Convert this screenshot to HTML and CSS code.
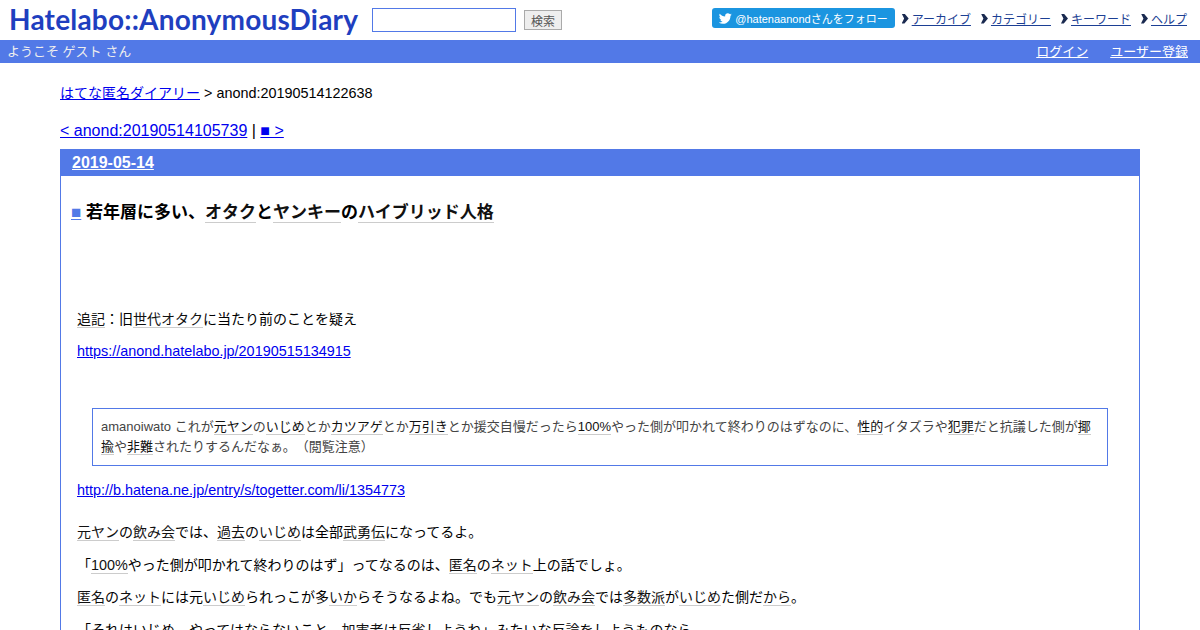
FILE: index.html
```html
<!DOCTYPE html>
<html lang="ja">
<head>
  <meta charset="UTF-8" />
  <title>anond:20190514122638</title>
  <link rel="stylesheet" href="styles.css">
</head>
<body>
  <div class="header">
    <a class="logo" href="#">Hatelabo::AnonymousDiary</a>
    <form class="search">
      <input class="search-box" type="text">
      <button class="search-btn" type="button">検索</button>
    </form>
    <div class="header-right">
      <a class="follow" href="#">
        <svg class="bird" viewBox="0 0 24 24"><path d="M23.6 4.6c-.9.4-1.8.7-2.8.8 1-.6 1.8-1.6 2.2-2.7-1 .6-2 1-3.1 1.2C18.9 2.9 17.6 2.3 16.200 2.300c-2.700 0-4.900 2.200-4.900 4.900 0 .4 0 .8.100 1.100C7.300 8.100 3.700 6.100 1.300 3.100c-.4.700-.7 1.600-.7 2.500 0 1.700.9 3.200 2.200 4.100-.8 0-1.600-.2-2.200-.6v.1c0 2.400 1.700 4.400 3.900 4.800-.4.1-.8.2-1.300.2-.3 0-.6 0-.9-.1.600 2 2.400 3.400 4.600 3.400-1.700 1.300-3.800 2.100-6.100 2.100-.4 0-.8 0-1.200-.1 2.200 1.400 4.800 2.200 7.500 2.200 9.100 0 14-7.500 14-14v-.6c1-.7 1.800-1.600 2.500-2.500z"/></svg>
        @hatenaanondさんをフォロー
      </a>
      <ul class="menu">
        <li><a href="#">アーカイブ</a></li>
        <li><a href="#">カテゴリー</a></li>
        <li><a href="#">キーワード</a></li>
        <li><a href="#">ヘルプ</a></li>
      </ul>
    </div>
  </div>

  <div class="welcome">
    <span>ようこそ ゲスト さん</span>
    <div class="welcome-links">
      <a href="#">ログイン</a>
      <a href="#">ユーザー登録</a>
    </div>
  </div>

  <div class="main">
    <p class="crumb"><a href="#">はてな匿名ダイアリー</a><span class="en"> &gt; anond:20190514122638</span></p>
    <p class="pager"><a href="#">&lt; anond:20190514105739</a> | <a href="#">■ &gt;</a></p>

    <div class="day">
      <h2 class="day-title"><a href="#">2019-05-14</a></h2>
      <div class="day-body">
        <h3 class="entry-title"><a class="sanchor" href="#">■</a> 若年層に多い、<a class="kw" href="#">オタク</a>と<a class="kw" href="#">ヤンキー</a>の<a class="kw" href="#">ハイブリッド人格</a></h3>

        <div class="entry">
          <p class="addendum"><a class="kw" href="#">追記</a>：旧<a class="kw" href="#">世代</a><a class="kw" href="#">オタク</a>に当たり前のことを疑え</p>
          <p><a class="en" href="#">https://anond.hatelabo.jp/20190515134915</a></p>

          <blockquote class="quote">amanoiwato これが<a class="kw" href="#">元ヤン</a>の<a class="kw" href="#">いじめ</a>とか<a class="kw" href="#">カツアゲ</a>とか<a class="kw" href="#">万引き</a>とか援交自慢だったら<a class="kw" href="#">100%</a>やった側が叩かれて終わりのはずなのに、<a class="kw" href="#">性的</a>イタズラや<a class="kw" href="#">犯罪</a>だと抗議した側が<a class="kw" href="#">揶揄</a>や<a class="kw" href="#">非難</a>されたりするんだなぁ。（閲覧注意）</blockquote>

          <p class="src"><a class="en" href="#">http://b.hatena.ne.jp/entry/s/togetter.com/li/1354773</a></p>

          <p class="first"><a class="kw" href="#">元ヤン</a>の<a class="kw" href="#">飲み会</a>では、<a class="kw" href="#">過去</a>の<a class="kw" href="#">いじめ</a>は全部<a class="kw" href="#">武勇伝</a>になってるよ。</p>
          <p>「<a class="kw en" href="#">100%</a>やった側が叩かれて終わりのはず」ってなるのは、<a class="kw" href="#">匿名</a>の<a class="kw" href="#">ネット</a>上の話でしょ。</p>
          <p><a class="kw" href="#">匿名</a>の<a class="kw" href="#">ネット</a>には元<a class="kw" href="#">いじめ</a>られっこが多<a class="kw" href="#">いか</a>らそうなるよね。でも<a class="kw" href="#">元ヤン</a>の<a class="kw" href="#">飲み会</a>では<a class="kw" href="#">多数派</a>が<a class="kw" href="#">いじめ</a>た側だ<a class="kw" href="#">から</a>。</p>
          <p>「それはいじめ、やってはならないこと、<a class="kw" href="#">加害者</a>は<a class="kw" href="#">反省</a>しようね」みたいな<a class="kw" href="#">反論</a>をしようものなら</p>
        </div>
      </div>
    </div>
  </div>
</body>
</html>
```

FILE: styles.css
```css
html, body {
  height: 630px;
  overflow: hidden;
}

body {
  margin: 0;
  padding: 0;
  font-family: "Liberation Sans", "Noto Sans CJK JP", sans-serif;
  font-size: 14px;
  color: #000;
  background: #fff;
  text-spacing-trim: space-all;
}

.en {
  font-size: 14.4px;
}

.header {
  display: flex;
  align-items: center;
  height: 40px;
  padding: 0 13px 0 9px;
}

.logo {
  width: 349px;
  margin-bottom: 2px;
  font-family: "Lato", sans-serif;
  font-size: 28px;
  font-weight: 700;
  letter-spacing: 0.2px;
  line-height: 38px;
  color: #1f3fbf;
  text-decoration: none;
  white-space: nowrap;
}

.search {
  display: flex;
  align-items: center;
  margin-left: 14px;
}

.search-box {
  box-sizing: border-box;
  width: 144px;
  height: 24px;
  border: 1px solid #5279e7;
  padding: 0 4px;
}

.search-btn {
  box-sizing: border-box;
  width: 38px;
  height: 20px;
  margin-left: 8px;
  padding: 0;
  border: 1px solid #aaa;
  background: #eee;
  color: #555;
  font-size: 12px;
  font-family: inherit;
}

.header-right {
  display: flex;
  align-items: center;
  margin-left: auto;
  padding-bottom: 4px;
}

.follow {
  display: flex;
  align-items: center;
  box-sizing: border-box;
  height: 20px;
  padding: 0 7px;
  border-radius: 3px;
  background: #1b95e0;
  color: #fff;
  font-size: 11px;
  text-decoration: none;
}

.bird {
  width: 13px;
  height: 13px;
  margin-right: 3px;
  fill: #fff;
}

.menu {
  display: flex;
  margin: 0;
  padding: 0;
  list-style: none;
  font-size: 12px;
}

.menu li {
  margin-left: 10px;
  padding-left: 10px;
  position: relative;
}

.menu li:first-child {
  margin-left: 7px;
}

.menu li::before {
  content: "";
  position: absolute;
  left: 0;
  top: 4px;
  width: 7px;
  height: 10px;
  background: #1a2a50;
  clip-path: polygon(0 0, 40% 0, 100% 50%, 40% 100%, 0 100%, 35% 50%);
}

.menu a {
  color: #1c3f94;
}

.welcome {
  display: flex;
  justify-content: space-between;
  align-items: center;
  box-sizing: border-box;
  height: 23px;
  padding: 0 12px 2px 7px;
  background: #5279e7;
  color: #eee;
  font-size: 13px;
}

.welcome-links {
  display: flex;
  gap: 22px;
}

.welcome-links a {
  color: #fff;
}

.main {
  padding: 0 60px;
}

.crumb {
  margin: 21px 0 0;
  line-height: 18px;
}

.pager {
  margin: 19px 0 0;
  font-size: 16px;
  line-height: 20px;
}

.day {
  margin-top: 8px;
  border: 1px solid #5279e7;
}

.day-title {
  margin: -1px -1px 0;
  padding: 0 12px;
  height: 27px;
  font-size: 16px;
  line-height: 27px;
  background: #5279e7;
}

.day-title a {
  color: #fff;
}

.day-body {
  padding: 0 31px 0 10px;
}

.entry-title {
  margin: 26px 0 0;
  font-size: 17px;
  line-height: 22px;
}

.sanchor {
  color: #5279e7;
}

.kw {
  color: #111;
  text-decoration: none;
  border-bottom: 1px solid #ccc;
}

.entry {
  padding-left: 6px;
}

.entry p {
  margin: 0;
  line-height: 22px;
}

.entry a:not(.kw) {
  color: #00e;
}

.entry .addendum {
  margin-top: 84px;
  margin-bottom: 10px;
}

.quote {
  margin: 46px 0 0 15px;
  padding: 8px;
  border: 1px solid #5279e7;
  font-size: 13px;
  line-height: 20px;
  color: #444;
}

.entry .src {
  margin-top: 13px;
}

.entry .first {
  margin-top: 20px;
}

.entry .first, .entry .first ~ p {
  margin-bottom: 10.6px;
}
```
